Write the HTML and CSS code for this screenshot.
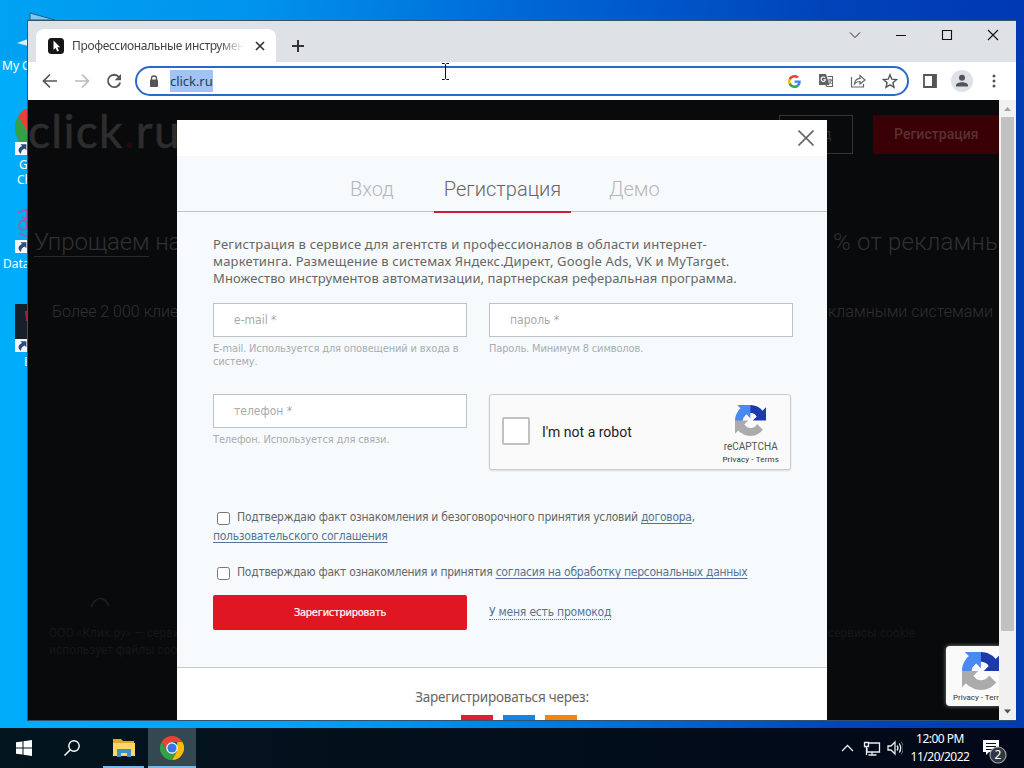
FILE: index.html
```html
<!DOCTYPE html>
<html lang="ru">
<head>
<meta charset="utf-8">
<title>click.ru</title>
<link rel="stylesheet" href="styles.css">
</head>
<body>
<svg class="defs" width="0" height="0">
  <defs>
    <symbol id="captcha" viewBox="0 0 64 64">
      <path d="M64 31.955l-.033-1.370V4.687l-7.160 7.160C50.948 4.674 42.033.093 32.050.093c-10.400 0-19.622 4.960-25.458 12.640l11.736 11.860a15.550 15.550 0 0 1 4.754-5.334c2.050-1.600 4.952-2.906 8.968-2.906.485 0 .86.057 1.135.163 4.976.393 9.288 3.140 11.828 7.124l-8.307 8.307z" fill="#1c3aa9"/>
      <path d="M31.862.094l-1.370.033H4.594l7.160 7.160C4.580 13.147 0 22.060 0 32.046c0 10.400 4.960 19.622 12.640 25.458L24.500 45.768a15.550 15.550 0 0 1-5.334-4.754c-1.600-2.050-2.906-4.952-2.906-8.968 0-.485.057-.86.163-1.135.393-4.976 3.140-9.288 7.124-11.828l8.307 8.307z" fill="#4a8af0"/>
      <path d="M.001 32.045l.033 1.370v25.898l7.160-7.160c5.860 7.173 14.774 11.754 24.760 11.754 10.400 0 19.622-4.960 25.458-12.640l-11.736-11.860a15.550 15.550 0 0 1-4.754 5.334c-2.050 1.600-4.952 2.906-8.968 2.906-.485 0-.86-.057-1.135-.163-4.976-.393-9.288-3.140-11.828-7.124l8.307-8.307z" fill="#ababab"/>
    </symbol>
    <symbol id="chrome" viewBox="0 0 24 24">
      <path d="M1.600 6A12 12 0 0 1 22.400 6H12L7 14.800z" fill="#ea4335"/>
      <path d="M22.400 6A12 12 0 0 1 12 24l5-9 .2-9z" fill="#fbbc04"/>
      <path d="M1.600 6A12 12 0 0 0 12 24l5-9H7z" fill="#34a048"/>
      <circle cx="12" cy="12" r="5.800" fill="#fff"/><circle cx="12" cy="12" r="4.600" fill="#3478e5"/>
    </symbol>
    <symbol id="shortcut" viewBox="0 0 12 12">
      <path d="M0 0h12v12H0z" fill="#f2f6fa"/><path d="M5 2h5.500v5.500L8.800 6C6.500 7 5.700 8.500 5.500 11 2 8.500 3 5.500 6.500 3.800z" fill="#2c4a7c"/>
    </symbol>
  </defs>
</svg>
<div class="desktop">
  <div class="shortcuts">
    <div class="item first"><svg class="folder" width="56" height="46" viewBox="0 0 56 46"><path d="M30 1l25 7H30z" fill="#7cc8f4" stroke="#235f83"/><path d="M17 31l11-4v7z" fill="#d4efff"/></svg><span class="label">My Computer</span></div>
    <div class="item second"><svg width="28" height="48" viewBox="0 0 28 48"><use href="#chrome" x="15" y="-4" width="46" height="46"/><use href="#shortcut" x="15" y="33" width="13" height="13"/></svg><span class="label l2">Google</span><span class="label l3">Chrome</span></div>
    <div class="item third"><svg width="28" height="48" viewBox="0 0 28 48"><path d="M17 5l11-4M19 18c0-7 8-7 8-1s-8 6-8 1m2-9 6 2m-8 14 9 4M27 2v8" fill="none" stroke="#a45a9c" stroke-width="1.500"/><use href="#shortcut" x="15" y="32" width="13" height="13"/></svg><span class="label l4">Database</span></div>
    <div class="item fourth"><svg width="28" height="50" viewBox="0 0 28 50"><path d="M15 0h13v36H15z" fill="#15202b"/><path d="M25 7h3v10h-2z" fill="#a51f36"/><use href="#shortcut" x="15" y="35" width="13" height="13"/></svg><span class="label l5">E</span></div>
  </div>

  <main class="window">
    <div class="tabstrip">
      <div class="tab">
        <svg width="16" height="16" viewBox="0 0 16 16"><rect width="16" height="16" rx="3.500" fill="#161616"/><path d="M5.500 2.500v9.300l2.200-1.900 1.500 3.600 1.700-.7-1.500-3.500h2.800z" fill="#fff"/></svg>
        <span class="tab-title">Профессиональные инструменты</span>
        <svg class="tab-close" width="10" height="10" viewBox="0 0 10 10"><path d="M1 1l8 8M9 1L1 9" stroke="#333" stroke-width="1.700"/></svg>
      </div>
      <svg class="plus" width="12" height="12" viewBox="0 0 12 12"><path d="M6 0v12M0 6h12" stroke="#333" stroke-width="2"/></svg>
      <div class="controls">
        <svg width="12" height="12" viewBox="0 0 12 12"><path d="M1 3.500l5 5 5-5" fill="none" stroke="#222"/></svg>
        <svg width="12" height="12" viewBox="0 0 12 12"><path d="M1 6.500h10" stroke="#111"/></svg>
        <svg width="12" height="12" viewBox="0 0 12 12"><path d="M1.500 1.500h9v9h-9z" fill="none" stroke="#111" stroke-width="1.100"/></svg>
        <svg width="12" height="12" viewBox="0 0 12 12"><path d="M1 1l10 10M11 1L1 11" stroke="#111" stroke-width="1.100"/></svg>
      </div>
    </div>
    <div class="toolbar">
      <svg width="16" height="16" viewBox="0 0 16 16"><path d="M15 8H2M8 1.500L1.500 8 8 14.500" fill="none" stroke="#555" stroke-width="1.700"/></svg>
      <svg width="16" height="16" viewBox="0 0 16 16"><path d="M1 8h13M8 1.500L14.500 8 8 14.500" fill="none" stroke="#bbb" stroke-width="1.700"/></svg>
      <svg width="16" height="16" viewBox="0 0 16 16"><path d="M13 4A6.200 6.200 0 1 0 14.200 9.500" fill="none" stroke="#555" stroke-width="1.800"/><path d="M15 1v6.300H8.700z" fill="#555"/></svg>
      <div class="omnibox">
        <svg width="10" height="12" viewBox="0 0 10 12"><path d="M2.500 5V3.500a2.500 2.500 0 0 1 5 0V5" fill="none" stroke="#555" stroke-width="1.300"/><rect x="1" y="4.500" width="8" height="7.500" rx="1" fill="#555"/></svg>
        <span class="url">click.ru</span>
        <svg class="omni-first" width="13" height="13" viewBox="0 0 48 48"><path fill="#ea4335" d="M24 9.500c3.500 0 6.700 1.200 9.200 3.600l6.900-6.900C35.900 2.400 30.500 0 24 0 14.600 0 6.500 5.400 2.600 13.200l8 6.200C12.400 13.700 17.700 9.500 24 9.500z"/><path fill="#4285f4" d="M47 24.600c0-1.600-.2-3.100-.4-4.600H24v9h12.900c-.6 3-2.300 5.500-4.800 7.200l7.700 6C44.400 38 47 32 47 24.600z"/><path fill="#fbbc05" d="M10.500 28.600a14 14 0 0 1 0-9.200l-8-6.200a24 24 0 0 0 0 21.600z"/><path fill="#34a853" d="M24 48c6.500 0 11.900-2.100 15.900-5.800l-7.700-6c-2.200 1.500-4.900 2.300-8.200 2.300-6.300 0-11.600-4.200-13.500-9.900l-8 6.200C6.500 42.600 14.600 48 24 48z"/></svg>
        <svg width="16" height="16" viewBox="0 0 16 16"><path d="M1 1h7l3.500 11H1z" fill="#5f6368"/><path d="M9.500 3.500h5v10h-5.500l-1.500-2" fill="none" stroke="#666" stroke-width="1.100"/><path d="M7 4.800A2.200 2.200 0 1 0 7.500 6.700H5.500" fill="none" stroke="#fff" stroke-width="1.100"/><path d="M9.500 7h4.500M12 5.500V7M13.400 7c-.3 2-1.500 3-2.500 3.800M10.800 8.200l2.800 2.800" stroke="#666" fill="none"/></svg>
        <svg width="16" height="16" viewBox="0 0 16 16"><path d="M1.500 4v10h12v-3" fill="none" stroke="#666" stroke-width="1.200"/><path d="M4.500 11c.3-4 2.500-5.500 5.500-5.700V2.500L15 7l-5 4V8.500C7.500 8.500 6 9 4.500 11z" fill="none" stroke="#666" stroke-width="1.200"/></svg>
        <svg width="16" height="16" viewBox="0 0 16 16"><path d="M8 1.800l1.800 4.400 4.700.4-3.600 3.100 1.100 4.600-4-2.500-4 2.500 1.100-4.600L1.500 6.600l4.700-.4z" fill="none" stroke="#555" stroke-width="1.400"/></svg>
      </div>
      <svg class="panel-icon" width="14" height="14" viewBox="0 0 14 14"><path d="M1 1h12v12H1z" fill="none" stroke="#555" stroke-width="1.800"/><path d="M9 1h4v12H9z" fill="#555"/></svg>
      <svg class="avatar" width="22" height="22" viewBox="0 0 22 22"><circle cx="11" cy="11" r="11" fill="#dee1e6"/><circle cx="11" cy="7.700" r="3" fill="#50545c"/><path d="M5 16.500v-1.200c0-4 12-4 12 0v1.200z" fill="#50545c"/></svg>
      <svg class="dots" width="4" height="14" viewBox="0 0 4 14"><g fill="#555"><circle cx="2" cy="2" r="1.500"/><circle cx="2" cy="7" r="1.500"/><circle cx="2" cy="12" r="1.500"/></g></svg>
    </div>
    <div class="viewport">
      <div class="page">
        <header class="site-head"><span class="logo">click<i>.</i>ru</span><span class="ghost">Вход</span><span class="reg">Регистрация</span></header>
        <div class="hero"><span><u>Упрощаем</u> на</span><span class="hero-right">% от рекламны</span></div>
        <div class="sub"><span>Более 2 000 клие</span><span>кламными системами</span></div>
        <svg class="chevron" width="20" height="12" viewBox="0 0 20 12"><path d="M1 11c5-11 13-11 18-1" fill="none" stroke="#202121" stroke-width="1.500"/></svg>
        <div class="foot"><span>ООО «Клик.ру» — сервис<br>использует файлы cookie</span><span>и сервисы cookie</span></div>

        <section class="modal">
          <div class="modal-head"><svg width="16" height="16" viewBox="0 0 16 16"><path d="M.5.5l15 15M15.500.5l-15 15" stroke="#666" stroke-width="1.600"/></svg></div>
          <div class="form-area">
            <nav class="tabs"><a class="t1">Вход</a><a class="active">Регистрация</a><a class="t3">Демо</a></nav>
            <div class="form">
              <p class="intro"><span class="i1">Регистрация в сервисе для агентств и профессионалов в области интернет-</span><span class="i2">маркетинга. Размещение в системах Яндекс.Директ, Google Ads, VK и MyTarget.</span><span class="i3">Множество инструментов автоматизации, партнерская реферальная программа.</span></p>
              <div class="fields">
                <div><div class="input">e-mail *</div><p class="hint">E-mail. Используется для оповещений и входа в<br>систему.</p></div>
                <div><div class="input">пароль *</div><p class="hint">Пароль. Минимум 8 символов.</p></div>
                <div><div class="input">телефон *</div><p class="hint phone">Телефон. Используется для связи.</p></div>
                <div class="captcha"><span class="robot-box"></span><span class="robot">I'm not a robot</span><div class="brand"><svg width="31" height="31"><use href="#captcha"/></svg><b>reCAPTCHA</b><small>Privacy - Terms</small></div></div>
              </div>
              <div class="agree"><i class="check"></i><span class="a1">Подтверждаю факт ознакомления и безоговорочного принятия условий <a>договора</a>,</span></div>
              <div class="agree second-line"><a class="a2">пользовательского соглашения</a></div>
              <div class="agree personal"><i class="check"></i><span class="a3">Подтверждаю факт ознакомления и принятия <a>согласия на обработку персональных данных</a></span></div>
              <div class="actions"><span class="submit">Зарегистрировать</span><a class="promo">У меня есть промокод</a></div>
            </div>
          </div>
          <div class="social"><p>Зарегистрироваться через:</p><div class="logos"><i class="white"></i><i class="red"></i><i class="blue"></i><i class="orange"></i></div></div>
        </section>
        <div class="float-captcha"><svg width="38" height="38"><use href="#captcha"/></svg><span>Privacy - Terms</span></div>
      </div>
      <div class="scrollbar"><svg width="17" height="17" viewBox="0 0 17 17"><path d="M5 11l3.500-4 3.500 4z" fill="#a3a3a3"/></svg><div class="thumb"></div><svg class="down" width="17" height="17" viewBox="0 0 17 17"><path d="M5 6.500h7l-3.500 4z" fill="#505050"/></svg></div>
    </div>
    <svg class="ibeam" width="9" height="17" viewBox="0 0 9 17"><path d="M1 .5h2.500l1 1 1-1H8M4.500 1.500v14M1 16.500h2.500l1-1 1 1H8" fill="none" stroke="#111"/></svg>
  </main>

  <footer class="taskbar">
    <span class="task"><svg width="16" height="16" viewBox="0 0 16 16"><path d="M0 2.300L6.500 1.400v6H0zM7.500 1.200L16 0v7.400H7.500zM0 8.500h6.500v6L0 13.700zM7.500 8.500H16V16l-8.500-1.200z" fill="#fff"/></svg></span>
    <span class="task"><svg width="16" height="16" viewBox="0 0 16 16"><circle cx="10" cy="6" r="5.200" fill="none" stroke="#fff" stroke-width="1.400"/><path d="M6.300 9.800L.5 15.500" stroke="#fff" stroke-width="1.500"/></svg></span>
    <span class="task open"><svg width="22" height="18" viewBox="0 0 22 18"><path d="M0 0h8l2 2h11v15H0z" fill="#e6a82b"/><path d="M0 4h22v13H0z" fill="#ffd667"/><path d="M4 17v-7h14v8h-4v-4H8v4H4z" fill="#3d91c8"/></svg></span>
    <span class="task open current"><svg width="24" height="24"><use href="#chrome"/></svg></span>
    <svg class="tray" width="62" height="20" viewBox="0 0 62 20"><g fill="none" stroke="#e9eef2" stroke-width="1.300"><path d="M1 13l5.500-5.500L12 13"/><path d="M28 5h10.500v9H26v-4M31 14v3M27.500 17h8M23.500 4.500h4v4h-4zM25.500 8.500V17"/><path d="M47 8h3l4-4v12l-4-4h-3zM56 7.500q2 2.500 0 5M58.200 5.500q3 4.500 0 9"/></g><path d="M60.500 4q3.500 6 0 12" fill="none" stroke="#697680"/></svg>
    <div class="clock"><span>12:00 PM</span><span>11/20/2022</span></div>
    <svg class="notice" width="26" height="25" viewBox="0 0 26 25"><path d="M1 1h16v12H7l-3 3v-3H1z" fill="#fff"/><path d="M4 4.500h10M4 7.500h10M4 10.500h7" stroke="#07141f"/><circle cx="16" cy="16" r="8" fill="#30373e" stroke="#98a0a6" stroke-width="1.200"/><text x="16" y="20" text-anchor="middle" class="num">2</text></svg>
  </footer>
</div>
</body>
</html>
```
FILE: styles.css
```css
* { box-sizing: border-box; }
body { margin: 0; font-family: "Noto Sans", sans-serif; }
p { margin: 0; }
.defs { position: absolute; }
.desktop { position: relative; width: 1024px; height: 768px; overflow: hidden; display: flex; flex-direction: column; justify-content: space-between; background: linear-gradient(90deg, #00adfb 0, #00a4f5 28%, #0079df 55%, #0045b8 82%, #003caf 100%); }
.desktop::before { content: ""; position: absolute; top: 0; left: 0; right: 0; height: 60px; background: linear-gradient(100deg, #00a2f3 0, #0093ed 25%, #0064d4 53%, #0043b9 80%, #0038b3 100%); }
.shortcuts { position: relative; width: 200px; padding-top: 12px; color: #fff; font-size: 12px; }
.item { display: flex; flex-direction: column; height: 97px; white-space: nowrap; }
.item svg { flex: none; }
.first { height: 94px; }
.second { height: 102px; padding-top: 3px; }
.third { height: 96px; }
.label { line-height: 15px; padding-left: 2px; }
.l2 { padding-left: 19px; }
.l3 { padding-left: 17px; }
.l4 { padding-left: 3px; }
.l5 { padding-left: 24px; }

/* browser window */
.window { position: absolute; left: 27px; top: 20px; width: 989px; height: 701px; border: 1px solid #31536c; border-right: 0; display: flex; flex-direction: column; background: #fff; }
.tabstrip { display: flex; height: 41px; padding: 8px 17px 0 8px; background: #dee1e6; }
.tab { display: flex; align-items: center; width: 240px; height: 33px; padding: 0 11px 0 12px; background: #fff; border-radius: 8px 8px 0 0; }
.tab-title { width: 172px; margin: 0 0 0 8px; overflow: hidden; white-space: nowrap; font-size: 12px; letter-spacing: -.35px; color: #444; -webkit-mask-image: linear-gradient(90deg, #000 85%, transparent); mask-image: linear-gradient(90deg, #000 85%, transparent); }
.tab-close { margin-left: auto; }
.plus { margin: 11px 0 0 16px; }
.controls { display: flex; gap: 34px; margin-left: auto; }
.toolbar { display: flex; align-items: center; height: 38px; padding: 0 18px 0 14px; gap: 16px; }
.omnibox { display: flex; align-items: center; width: 774px; height: 30px; margin-left: -3px; padding: 0 9px 0 12px; border: 2px solid #2c67c9; border-radius: 15px; gap: 16px; }
.url { margin-left: -5px; line-height: 22px; background: #a1c3f5; color: #263c5d; font-size: 13px; letter-spacing: -.05px; }
.omni-first { margin: 0 1px 0 auto; }
.panel-icon { margin-left: -2px; }
.avatar { margin-left: -2px; }
.dots { margin-left: 3px; }
.ibeam { position: absolute; left: 413px; top: 42px; }
.viewport { display: flex; height: 620px; }
.page { position: relative; width: 971px; height: 620px; overflow: hidden; background: #090a0b; color: #303132; font-family: Roboto, sans-serif; white-space: nowrap; }
.scrollbar { display: flex; flex-direction: column; align-items: center; width: 17px; background: #f1f1f1; }
.thumb { width: 13px; height: 514px; background: #c1c1c1; }
.down { margin-top: auto; }

/* dimmed page */
.site-head { display: flex; height: 70px; }
.logo { flex: none; width: 751px; line-height: 61px; font-family: Lato, sans-serif; font-size: 46px; letter-spacing: 1.300px; font-weight: 400; color: #2d2d2d; -webkit-text-stroke: .6px #2d2d2d; }
.logo i { font-style: normal; color: #26080b; -webkit-text-stroke-color: #26080b; }
.ghost { flex: none; width: 74px; height: 39px; margin: 15px 20px 0 0; padding: 0 20px; border: 1px solid #353535; line-height: 37px; font-size: 14px; }
.reg { flex: none; width: 126px; height: 39px; margin-top: 15px; padding-left: 21px; background: #390006; line-height: 39px; font-size: 14px; color: #5a3034; letter-spacing: .05px; font-weight: 500; }
.hero { display: flex; justify-content: space-between; padding: 57px 0 0 6px; font-size: 24px; font-weight: 300; line-height: 30px; letter-spacing: -.1px; }
.hero u { text-decoration: none; border-bottom: 1px solid #292a2b; }
.hero-right { width: 166px; letter-spacing: .2px; }
.sub { display: flex; justify-content: space-between; padding: 43px 6px 0 24px; font-size: 16px; line-height: 24px; font-weight: 300; }
.chevron { display: block; margin: 272px 0 0 62px; }
.foot { display: flex; justify-content: space-between; padding: 17px 84px 0 21px; font-size: 12px; line-height: 17px; color: #151718; }

/* registration dialog */
.modal { position: absolute; left: 149px; top: 20px; width: 650px; height: 600px; overflow: hidden; background: #fff; color: #666; font-family: "DejaVu Sans Condensed", "DejaVu Sans", sans-serif; }
.modal-head { display: flex; justify-content: flex-end; height: 36px; padding: 10px 13px 0 0; }
.form-area { height: 512px; background: #f6fafc; border-bottom: 1px solid #c7cccf; }
.tabs { display: flex; height: 56px; padding-left: 173px; border-bottom: 1px solid #bfc4c8; font-family: Roboto, sans-serif; font-size: 20px; font-weight: 300; line-height: 67px; color: #b5b8ba; }
.t1 { width: 84px; }
.active { width: 137px; height: 57px; flex: none; text-align: center; border-bottom: 2px solid #c91e32; color: #666; }
.t3 { padding-left: 38px; }
.form { padding: 24px 34px 0 36px; }
.intro { font-family: "Noto Sans", sans-serif; font-size: 13px; line-height: 17px; white-space: nowrap; }
.intro span { display: block; }
.i1 { letter-spacing: .2px; }
.i2 { letter-spacing: .17px; }
.i3 { letter-spacing: .1px; }
.fields { display: grid; grid-template-columns: 254px 304px; grid-template-rows: 91px 76px; gap: 0 22px; margin-top: 16px; }
.input { height: 34px; padding-left: 20px; border: 1px solid #bdc4c6; background: #fff; font-size: 12px; line-height: 33px; color: #a8aaac; }
.hint { padding-top: 5px; font-size: 11px; line-height: 13px; color: #a8adb0; letter-spacing: -.15px; }
.captcha { display: flex; align-items: center; width: 302px; height: 76px; padding: 0 11px 0 12px; border: 1px solid #c9cccf; border-radius: 3px; background: #fafafa; box-shadow: 0 1px 2px #ddd; font-family: Roboto, sans-serif; }
.robot-box { width: 28px; height: 28px; margin-top: -2px; border: 2px solid #c1c1c1; border-radius: 2px; background: #fff; }
.robot { margin-left: 12px; color: #222; font-size: 14px; }
.brand { display: flex; flex-direction: column; align-items: center; margin-left: auto; color: #555; padding-top: 6px; }
.brand b { margin-top: 4px; font-size: 10px; line-height: 14px; font-weight: 400; }
.brand small { font-size: 8px; line-height: 11px; color: #333; letter-spacing: .15px; }
.agree { display: flex; align-items: center; height: 20px; font-size: 12px; line-height: 20px; letter-spacing: -.24px; }
.agree a, .promo { color: #577394; text-decoration: underline; text-underline-offset: 2px; }
.a2, .a3 { letter-spacing: -.27px; }
.fields + .agree { margin-top: 37px; }
.check { flex: none; width: 13px; height: 13px; margin: 3px 7px 0 4px; border: 1px solid #767676; border-radius: 2.500px; background: #fff; }
.second-line { height: 18px; }
.personal { margin-top: 17px; }
.actions { display: flex; gap: 22px; align-items: center; margin-top: 13px; }
.submit { width: 254px; height: 35px; border-radius: 2px; background: #e01622; color: #fff; text-align: center; font-size: 11px; line-height: 36px; letter-spacing: -.25px; -webkit-text-stroke: .2px #fff; }
.actions .promo { font-size: 12px; letter-spacing: -.2px; text-decoration: none; border-bottom: 1px dotted #577394; line-height: 14px; }
.social { padding-top: 19px; text-align: center; font-family: "Noto Sans", sans-serif; font-size: 13.500px; letter-spacing: -.2px; line-height: 20px; }
.logos { display: flex; justify-content: center; gap: 10px; padding-top: 8px; padding-right: 8px; }
.logos i { width: 32px; height: 32px; }
.red { background: #df1d34; }
.blue { background: #1783e0; }
.orange { background: #ef8618; }
.float-captcha { position: absolute; left: 918px; top: 546px; width: 72px; height: 60px; padding: 6px 0 0 16px; background: #fafafa; border-radius: 4px; box-shadow: 0 0 4px #888; }
.float-captcha svg { display: block; }
.float-captcha span { display: block; margin: 4px 0 0 -9px; font-size: 8px; line-height: 8px; color: #333; }

.taskbar { position: relative; display: flex; align-items: center; height: 40px; background: linear-gradient(90deg, #03151f, #020d1b 60%, #020817); color: #fff; }
.task { display: flex; align-items: center; justify-content: center; width: 48px; height: 40px; }
.task:nth-child(2) { margin-right: 7px; }
.open { width: 41px; border-bottom: 2px solid #75b9ed; padding-top: 1px; }
.current { width: 48px; margin-left: 4px; background: #344852; }
.tray { margin-left: auto; }
.clock { display: flex; flex-direction: column; align-items: center; width: 60px; margin-left: 7px; font-size: 12px; line-height: 18px; letter-spacing: -.5px; }
.notice { margin: 6px 16px 0 12px; }
.num { fill: #fff; font: 12px "Noto Sans", sans-serif; }
```
